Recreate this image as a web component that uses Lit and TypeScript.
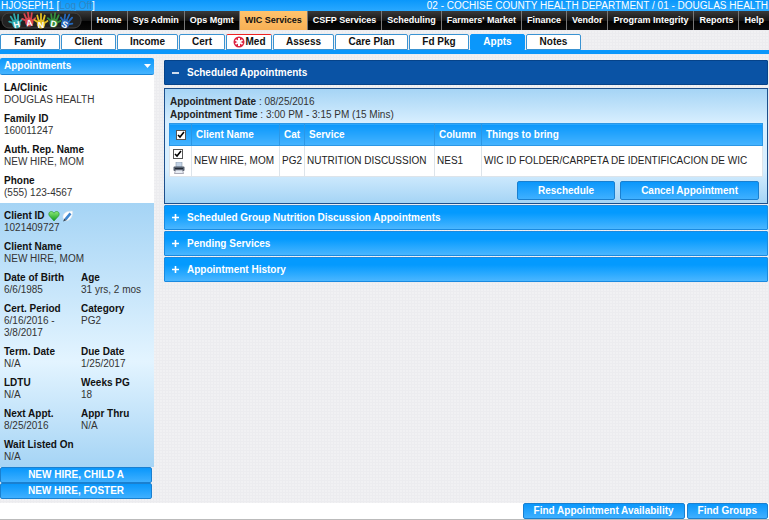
import { LitElement, html, css, svg } from "lit";
import { customElement, state } from "lit/decorators.js";
import { classMap } from "lit/directives/class-map.js";

interface Field {
  label: string;
  value: string;
  icons?: boolean;
}

const NAV = [
  "Home", "Sys Admin", "Ops Mgmt", "WIC Services", "CSFP Services", "Scheduling",
  "Farmers' Market", "Finance", "Vendor", "Program Integrity", "Reports", "Help",
];

const TABS = [
  { name: "Family", size: "w60" },
  { name: "Client", size: "w54" },
  { name: "Income", size: "w62" },
  { name: "Cert", size: "w46" },
  { name: "Med", size: "w46", alert: true },
  { name: "Assess", size: "w62" },
  { name: "Care Plan", size: "w73" },
  { name: "Fd Pkg", size: "w60" },
  { name: "Appts", size: "w54" },
  { name: "Notes", size: "w54" },
];

const FAMILY: Field[] = [
  { label: "LA/Clinic", value: "DOUGLAS HEALTH" },
  { label: "Family ID", value: "160011247" },
  { label: "Auth. Rep. Name", value: "NEW HIRE, MOM" },
  { label: "Phone", value: "(555) 123-4567" },
];

const CLIENT: Field[][] = [
  [{ label: "Client ID", value: "1021409727", icons: true }],
  [{ label: "Client Name", value: "NEW HIRE, MOM" }],
  [{ label: "Date of Birth", value: "6/6/1985" }, { label: "Age", value: "31 yrs, 2 mos" }],
  [{ label: "Cert. Period", value: "6/16/2016 - 3/8/2017" }, { label: "Category", value: "PG2" }],
  [{ label: "Term. Date", value: "N/A" }, { label: "Due Date", value: "1/25/2017" }],
  [{ label: "LDTU", value: "N/A" }, { label: "Weeks PG", value: "18" }],
  [{ label: "Next Appt.", value: "8/25/2016" }, { label: "Appr Thru", value: "N/A" }],
  [{ label: "Wait Listed On", value: "N/A" }],
];

const HANDS = [
  { letter: "H", color: "#2fa9ad", x: 16, y: 10, turn: -14 },
  { letter: "A", color: "#d8434d", x: 29, y: 8, turn: -8 },
  { letter: "N", color: "#e3bd22", x: 41, y: 10, turn: 0 },
  { letter: "D", color: "#35913c", x: 54, y: 9, turn: 8 },
  { letter: "S", color: "#2468bd", x: 66, y: 10, turn: 24 },
];

@customElement("app-root")
export class AppRoot extends LitElement {
  @state() private tab = "Appts";

  static styles = css`
    :host {
      display: flex;
      flex-direction: column;
      min-height: 100vh;
      box-sizing: border-box;
      background: #fff;
      color: #333;
      font: 10px/12px "Liberation Sans", Arial, sans-serif;
    }
    * { box-sizing: border-box; }
    button { font: inherit; margin: 0; cursor: pointer; }
    a { color: inherit; text-decoration: none; }
    svg { display: block; }

    .top {
      display: flex;
      justify-content: space-between;
      height: 11px;
      padding: 0 1px;
      background: linear-gradient(#0a97fb, #2aa9ff);
      color: #fff;
      line-height: 12px;
      white-space: nowrap;
    }
    .logoff { color: #2f86c4; text-decoration: underline; }

    .nav {
      display: flex;
      height: 19px;
      background: linear-gradient(#3a3a3a, #161616 50%, #000 51%, #0a0a0a);
      font-size: 9px;
      font-weight: bold;
      color: #fff;
      white-space: nowrap;
    }
    .logo { flex: 1; min-width: 84px; padding-top: 1px; }
    .nav a {
      padding: 0 5px;
      border-left: 1px solid #777;
      line-height: 19px;
    }
    .nav a.on { background: linear-gradient(#ffc36d, #f7b055); color: #111; }

    .main {
      flex: 1;
      display: flex;
      flex-direction: column;
      background-color: #f1f1f3;
      background-image:
        linear-gradient(#ececef 1px, transparent 1px),
        linear-gradient(90deg, #ececef 1px, transparent 1px);
      background-size: 3px 3px;
    }
    .tabs {
      display: flex;
      gap: 1px;
      height: 24px;
      padding-top: 4px;
      border-bottom: 4px solid #0a97fb;
    }
    .tab {
      display: flex;
      align-items: center;
      justify-content: center;
      gap: 1px;
      height: 16px;
      padding: 0;
      border: 1px solid #3a93d2;
      border-radius: 2px 2px 0 0;
      background: #fff;
      color: #111;
      font-weight: bold;
    }
    .w46 { width: 46px; }
    .w54 { width: 55px; }
    .w60 { width: 60px; }
    .w62 { width: 61px; }
    .w73 { width: 73px; }
    .tab.alert { border-top-color: #e22; }
    .tab.on { background: #0a97fb; border-color: #0a97fb; color: #fff; }

    .body {
      display: grid;
      grid-template-columns: 154px 1fr;
      gap: 10px;
      padding: 4px 1px 4px 0;
    }
    .menu {
      display: flex;
      width: 100%;
      align-items: center;
      justify-content: space-between;
      height: 17px;
      padding: 0 3px 0 4px;
      border: 1px solid #1a86d8;
      border-width: 0 0 1px;
      border-radius: 2px;
      background: linear-gradient(#0a97fb, #46b4ff);
      color: #fff;
      font-weight: bold;
    }
    .family, .client { display: flex; flex-direction: column; gap: 7px; padding: 7px 4px 4px; }
    .family { background: #fff; }
    .client { background: linear-gradient(#a5d4f5, #e3f4ff 60%, #a5d4f5); }
    .row { display: grid; grid-template-columns: 67px 1fr; column-gap: 10px; }
    .row.single { grid-template-columns: 1fr; }
    dl, dt, dd { margin: 0; }
    dt { display: flex; align-items: center; gap: 3px; color: #111; font-weight: bold; }
    .people { display: flex; flex-direction: column; padding-right: 2px; }

    .btn {
      height: 16px;
      padding: 0 10px;
      border: 1px solid #1a80d0;
      border-radius: 2px;
      background: linear-gradient(#0a97fb, #3fb0ff);
      color: #fff;
      font-weight: bold;
      line-height: 12px;
    }
    .content { display: flex; flex-direction: column; gap: 1px; padding-top: 2px; min-width: 0; }
    .head {
      display: flex;
      align-items: center;
      gap: 8px;
      height: 25px;
      width: 100%;
      padding: 0 7px;
      border: 1px solid #1a8ae0;
      border-radius: 1px;
      background: linear-gradient(#049afe 30%, #4ab6ff);
      color: #fff;
      font-weight: bold;
    }
    .head.open { background: #0a53a5; border-color: #064389; }
    .panel {
      margin: 2px 0 0;
      padding: 6px 4px 3px;
      border: 1px solid #1d4f8c;
      background: linear-gradient(#a5d4f5, #d8efff 30%, #d8efff 70%, #a5d4f5);
    }
    .when { padding-left: 1px; line-height: 13px; }
    .when b { color: #222; }
    table {
      width: 100%;
      margin-top: 2px;
      table-layout: fixed;
      border-collapse: collapse;
      background: #fff;
    }
    .c-pick { width: 22px; }
    .c-name { width: 88px; }
    .c-cat { width: 25px; }
    .c-service { width: 130px; }
    .c-column { width: 47px; }
    th {
      height: 22px;
      padding: 0 0 0 4px;
      border: 1px solid #2b97e6;
      background: linear-gradient(#0a97fb, #46b4ff);
      color: #fff;
      text-align: left;
      white-space: nowrap;
    }
    td { height: 31px; padding: 0 0 0 2px; border: 1px solid #dde4ea; color: #222; white-space: nowrap; }
    .pick { padding: 0 4px; }
    .check {
      appearance: none;
      display: block;
      width: 10px;
      height: 10px;
      margin: 0 auto;
      border: 1px solid #555;
      background: #fff;
    }
    .check:checked {
      background: #fff url("data:image/svg+xml,%3Csvg xmlns='http://www.w3.org/2000/svg' viewBox='0 0 8 8'%3E%3Cpath d='M1 4l2 2 4-5' fill='none' stroke='%23000' stroke-width='1.6'/%3E%3C/svg%3E");
    }
    td.pick { padding: 0 0 0 3px; }
    td .check { margin: 0 0 3px; }
    .print { padding: 0; border: 0; background: none; display: block; }
    .actions { display: flex; justify-content: flex-end; gap: 5px; padding: 4px 4px 0 0; }
    .actions .btn { height: 19px; padding: 0 20px; }
    .footer {
      display: flex;
      justify-content: flex-end;
      gap: 2px;
      height: 18px;
      padding-right: 1px;
      background: #fff;
      border-bottom: 2px solid #bbb;
    }
  `;

  private logo() {
    return html`<svg width="82" height="18" viewBox="0 0 82 18" role="img" aria-label="HANDS">
      <rect x="2" y="1" width="79" height="15" rx="7" fill="#222" stroke="#444" />
      ${HANDS.map(
        (h) => svg`<g transform="translate(${h.x} ${h.y}) rotate(${h.turn})">
          <path d="M-2 1L-6.500 -2M-2 0L-3.800 -6.500M0 0V-8M2 0L3.800 -6.500M2 2L6.500 -1" stroke=${h.color} stroke-width="1.800" stroke-linecap="round" fill="none" />
          <ellipse cy="2" rx="4.200" ry="4.500" fill=${h.color} />
          <text y="6" text-anchor="middle" font-family="Liberation Sans, sans-serif" font-size="9" font-weight="bold" fill="#fff">${h.letter}</text>
        </g>`
      )}
    </svg>`;
  }

  private field(f: Field) {
    return html`<div>
      <dt>${f.label}${f.icons ? this.clientIcons() : ""}</dt>
      <dd>${f.value}</dd>
    </div>`;
  }

  private clientIcons() {
    return html`<svg width="26" height="12" viewBox="0 0 26 12" aria-hidden="true">
      <defs>
        <linearGradient id="leaf" x2="0" y2="1">
          <stop stop-color="#8be878" /><stop offset="1" stop-color="#0f9a1a" />
        </linearGradient>
      </defs>
      <path d="M6 11L1.500 6C0 3.800 1.200 1.500 3.300 1.500 4.600 1.500 5.500 2.200 6 3.200 6.500 2.200 7.400 1.500 8.700 1.500c2.100 0 3.300 2.300 1.800 4.500z" fill="url(#leaf)" stroke="#188a22" stroke-width=".6" />
      <path d="M15 8C14.500 4 17.500 .8 24.500 1c.8 5-2 9.500-7 10z" fill="#fff" stroke="#d3e1ec" stroke-width=".6" />
      <path d="M16.500 8.500L21.500 2.500l2 1.700-5 6z" fill="#3e86d0" />
      <path d="M15 11.500l1.500-3 2 1.700z" fill="#345" />
    </svg>`;
  }

  render() {
    return html`
      <header>
        <div class="top">
          <span>HJOSEPH1 [<a class="logoff" href="#">Log Off</a>]</span>
          <span>02 - COCHISE COUNTY HEALTH DEPARTMENT / 01 - DOUGLAS HEALTH</span>
        </div>
        <nav class="nav">
          <div class="logo">${this.logo()}</div>
          ${NAV.map((n) => html`<a href="#" class=${classMap({ on: n === "WIC Services" })}>${n}</a>`)}
        </nav>
      </header>
      <div class="main">
        <div class="tabs">
          ${TABS.map(
            (t) => html`<button
              class=${classMap({ tab: true, [t.size]: true, alert: !!t.alert, on: t.name === this.tab })}
              @click=${() => (this.tab = t.name)}
            >${t.alert
              ? html`<svg width="12" height="12" viewBox="0 0 12 12" aria-hidden="true">
                  <circle cx="6" cy="6" r="5.500" fill="#dc2440" />
                  <path d="M6 2v8M2.500 4l7 4M9.500 4L2.500 8" stroke="#fff" stroke-width="2" />
                </svg>`
              : ""}${t.name}</button>`
          )}
        </div>
        <div class="body">
          <aside>
            <button class="menu">Appointments
              <svg width="7" height="4" viewBox="0 0 7 4" aria-hidden="true"><path d="M0 0h7L3.500 4z" fill="#fff" /></svg>
            </button>
            <dl class="family">${FAMILY.map((f) => this.field(f))}</dl>
            <dl class="client">
              ${CLIENT.map((r) => html`<div class=${classMap({ row: true, single: r.length === 1 })}>${r.map((f) => this.field(f))}</div>`)}
            </dl>
            <div class="people">
              <button class="btn">NEW HIRE, CHILD A</button>
              <button class="btn">NEW HIRE, FOSTER</button>
            </div>
          </aside>
          <main class="content">
            ${this.head("Scheduled Appointments", true)}
            <section class="panel">
              <div class="when"><b>Appointment Date</b> : 08/25/2016</div>
              <div class="when"><b>Appointment Time</b> : 3:00 PM - 3:15 PM (15 Mins)</div>
              <table>
                <colgroup>
                  <col class="c-pick" /><col class="c-name" /><col class="c-cat" />
                  <col class="c-service" /><col class="c-column" /><col />
                </colgroup>
                <thead>
                  <tr>
                    <th class="pick"><input class="check" type="checkbox" aria-label="Select all" checked /></th>
                    <th>Client Name</th><th>Cat</th><th>Service</th><th>Column</th><th>Things to bring</th>
                  </tr>
                </thead>
                <tbody>
                  <tr>
                    <td class="pick">
                      <input class="check" type="checkbox" aria-label="Select NEW HIRE, MOM" checked />
                      <button class="print" aria-label="Print">
                        <svg width="12" height="12" viewBox="0 0 12 12">
                          <path d="M3 0h6v5H3z" fill="#c3d3e6" stroke="#8897aa" stroke-width=".6" />
                          <rect x=".5" y="4.500" width="11" height="4.500" rx="1" fill="#56606e" />
                          <path d="M2 6.500h8" stroke="#222a35" />
                          <path d="M2.500 8h7l1 3.500h-9z" fill="#e9eef5" stroke="#778" stroke-width=".6" />
                        </svg>
                      </button>
                    </td>
                    <td>NEW HIRE, MOM</td><td>PG2</td><td>NUTRITION DISCUSSION</td><td>NES1</td>
                    <td>WIC ID FOLDER/CARPETA DE IDENTIFICACION DE WIC</td>
                  </tr>
                </tbody>
              </table>
              <div class="actions">
                <button class="btn">Reschedule</button>
                <button class="btn">Cancel Appointment</button>
              </div>
            </section>
            ${this.head("Scheduled Group Nutrition Discussion Appointments")}
            ${this.head("Pending Services")}
            ${this.head("Appointment History")}
          </main>
        </div>
      </div>
      <footer class="footer">
        <button class="btn">Find Appointment Availability</button>
        <button class="btn">Find Groups</button>
      </footer>
    `;
  }

  private head(title: string, open = false) {
    return html`<button class=${classMap({ head: true, open })} aria-expanded=${open ? "true" : "false"}>
      <svg width="7" height="7" viewBox="0 0 7 7" aria-hidden="true">
        <path d=${open ? "M0 4h7" : "M0 3.500h7M3.500 0v7"} stroke="#fff" stroke-width="1.600" />
      </svg>${title}
    </button>`;
  }
}
